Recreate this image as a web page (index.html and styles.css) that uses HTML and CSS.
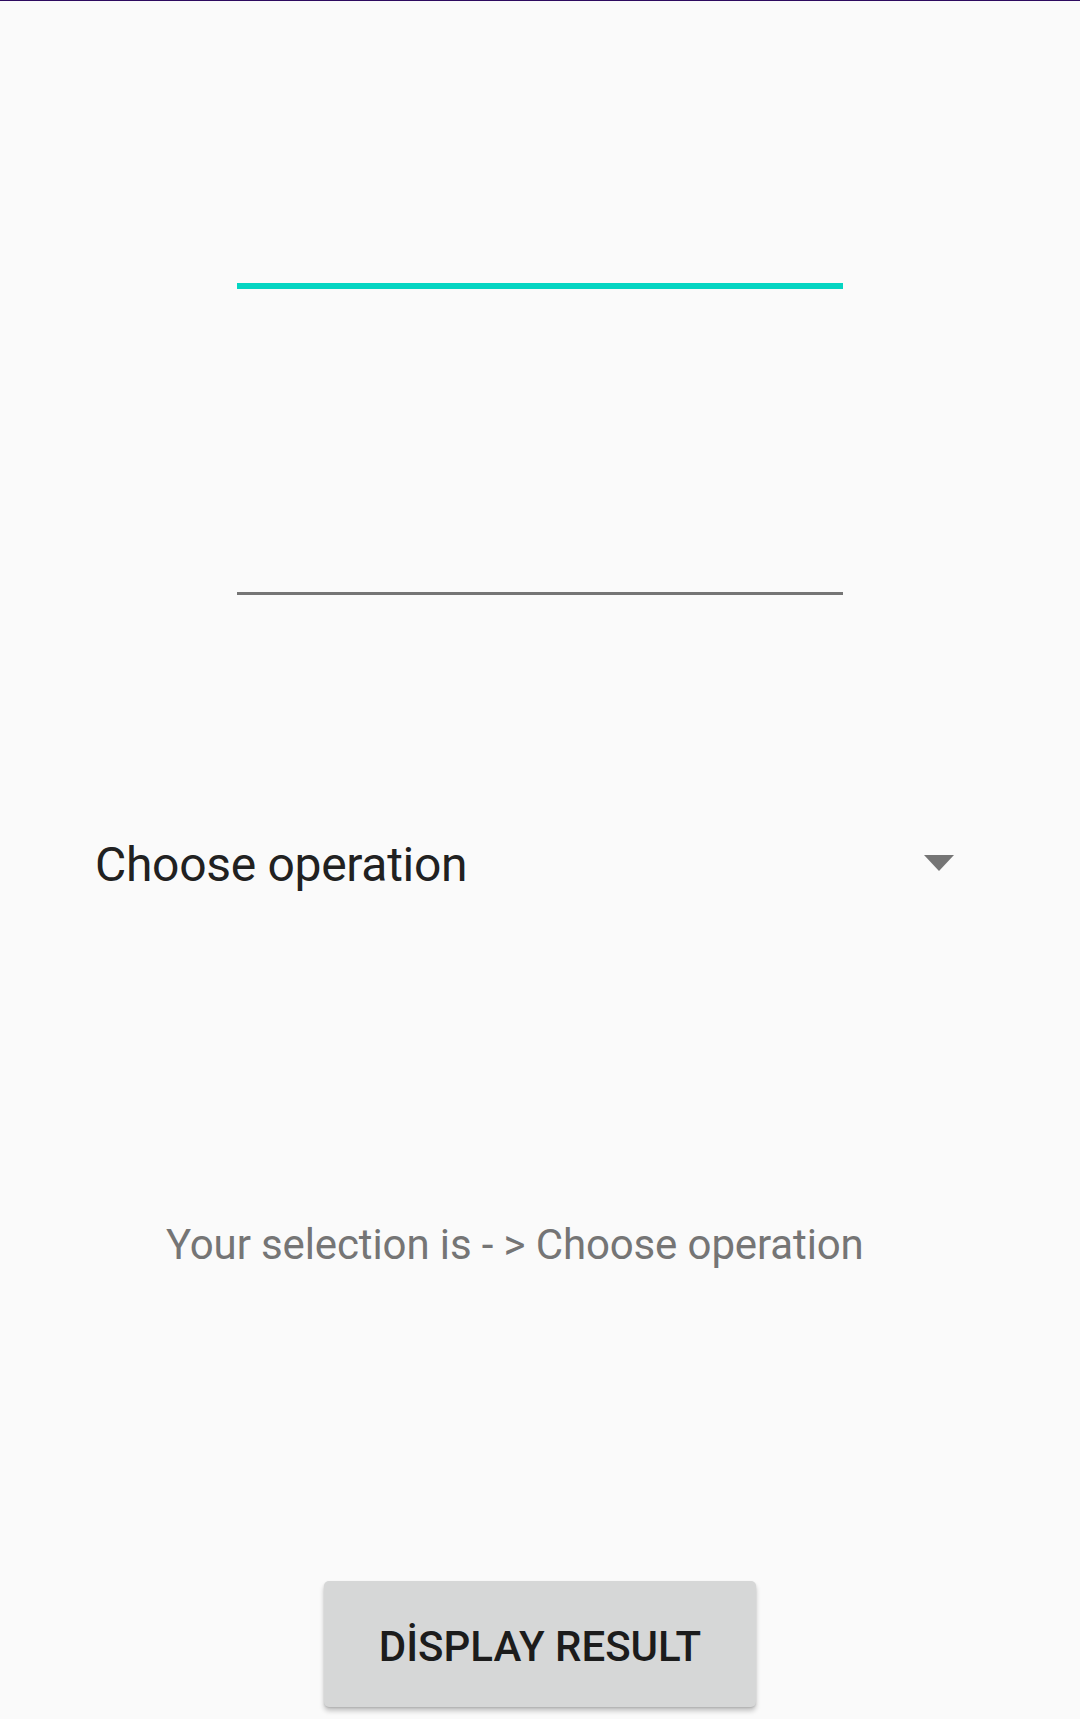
FILE: index.html
```html
<!DOCTYPE html>
<html>
<head>
<meta charset="utf-8">
<link rel="stylesheet" href="styles.css">
</head>
<body>
<div class="screen">
  <div class="statusline"></div>
  <div class="field field-focused"></div>
  <div class="field field-normal"></div>
  <div class="spinner">
    <span class="spinner-text">Choose operation</span>
    <span class="spinner-arrow"></span>
  </div>
  <div class="selection">Your selection is - &gt; Choose operation</div>
  <div class="button-row">
    <button class="button">DİSPLAY RESULT</button>
  </div>
</div>
</body>
</html>
```
FILE: styles.css
```css
html, body {
  margin: 0;
  padding: 0;
  background: #fafafa;
}
.screen {
  width: 1080px;
  height: 1719px;
  overflow: hidden;
  display: flex;
  flex-direction: column;
  font-family: Roboto, "Noto Sans", sans-serif;
  background: #fafafa;
}
.statusline {
  height: 1px;
  background: #2d0b5f;
}
.field {
  margin-left: 237px;
  width: 606px;
}
.field-focused {
  margin-top: 282px;
  height: 6px;
  background: #05d5c2;
}
.field-normal {
  margin-top: 303px;
  height: 3px;
  background: #757575;
}
.spinner {
  margin-top: 242px;
  height: 56px;
  padding: 0 126px 0 95px;
  display: flex;
  justify-content: space-between;
  align-items: flex-start;
}
.spinner-text {
  font-size: 48px;
  line-height: 56px;
  letter-spacing: -0.3px;
  color: #212121;
}
.spinner-arrow {
  margin-top: 18px;
  width: 0;
  height: 0;
  border-left: 15.5px solid transparent;
  border-right: 15.5px solid transparent;
  border-top: 16px solid #757575;
}
.selection {
  margin-top: 327px;
  padding-left: 166px;
  font-size: 42px;
  line-height: 49px;
  letter-spacing: -0.12px;
  color: #757575;
}
.button-row {
  margin-top: 312px;
  display: flex;
  justify-content: center;
}
.button {
  width: 432px;
  height: 126px;
  border: none;
  border-radius: 5px;
  background: #d6d7d7;
  color: #1c1c1c;
  font-family: Roboto, "Noto Sans", sans-serif;
  font-weight: 500;
  font-size: 42px;
  letter-spacing: 0;
  padding: 0;
  padding-top: 4px;
  box-shadow: 0 4px 5px rgba(0,0,0,0.22), 0 1px 2px rgba(0,0,0,0.12);
}
```
